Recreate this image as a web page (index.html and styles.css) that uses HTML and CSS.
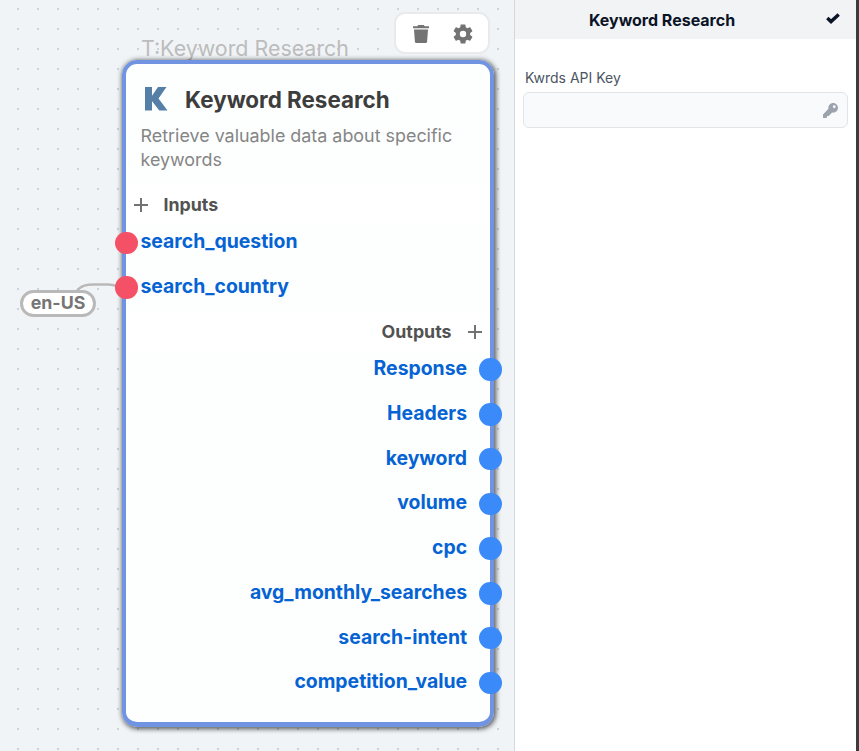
FILE: index.html
```html
<!DOCTYPE html>
<html lang="en">
<head>
<meta charset="utf-8">
<title>Keyword Research</title>
<link rel="stylesheet" href="styles.css">
</head>
<body>
<main class="canvas">
  <svg class="wire" width="46" height="14" viewBox="0 0 46 14"><path d="M2 10C7 3 13 2.500 20 2.500H34C40 2.500 42 4 44 5" fill="none" stroke="#b9b9b9" stroke-width="2.5"/></svg>
  <div class="constant">en-US</div>
  <div class="node-caption">T:Keyword Research</div>
  <div class="toolbar">
    <svg width="16" height="18" viewBox="0 0 16 18" fill="#737373"><path d="M0 1.3h4.3L5.2 0h5.6l.9 1.3H16v2H0zM1 4.5h14l-.9 12.2Q14 18 12.700 18H3.300Q2 18 1.900 16.700z"/></svg>
    <svg width="20" height="20" viewBox="2 2 20 20" fill="#737373"><path d="M19.140 12.940c.04-.3.06-.61.06-.94s-.02-.64-.07-.94l2.030-1.580c.18-.14.23-.41.12-.61l-1.920-3.320c-.12-.22-.37-.29-.59-.22l-2.390.96c-.5-.38-1.030-.7-1.620-.94l-.36-2.540A.48.48 0 0 0 13.920 2.400h-3.840c-.24 0-.43.17-.47.41l-.36 2.540c-.59.24-1.130.57-1.620.94l-2.390-.96c-.22-.08-.47 0-.59.22L2.740 8.870c-.12.21-.08.47.12.61l2.030 1.580c-.05.3-.09.63-.09.94s.02.64.07.94l-2.030 1.580c-.18.14-.23.41-.12.61l1.920 3.320c.12.22.37.29.59.22l2.390-.96c.5.38 1.030.7 1.620.94l.36 2.540c.05.24.24.41.48.41h3.840c.24 0 .44-.17.47-.41l.36-2.540c.59-.24 1.130-.56 1.620-.94l2.390.96c.22.08.47 0 .59-.22l1.920-3.320c.12-.22.07-.47-.12-.61zM12 15.200a3.200 3.200 0 1 1 0-6.400 3.200 3.200 0 0 1 0 6.400z"/></svg>
  </div>
  <article class="node">
    <header class="node-head">
      <svg width="23" height="24" viewBox="0 0 23 24" fill="#557fa6"><path d="M0 0H7V23.500H0zM6.500 9.500 13 0H21.500L13.500 11.500 22.500 23.500H14.300L6.500 13.500z"/></svg>
      <h1>Keyword Research</h1>
    </header>
    <p class="description">Retrieve valuable data about specific keywords</p>
    <div class="section"><svg width="16" height="16"><path d="M8 1V15M1 8H15" stroke="#737373" stroke-width="2"/></svg><span>Inputs</span></div>
    <ul class="inputs">
      <li><i class="port"></i>search_question</li>
      <li><i class="port"></i>search_country</li>
    </ul>
    <div class="section section-out"><span>Outputs</span><svg width="16" height="16"><path d="M8 1V15M1 8H15" stroke="#737373" stroke-width="2"/></svg></div>
    <ul class="outputs">
      <li>Response<i class="port"></i></li>
      <li>Headers<i class="port"></i></li>
      <li>keyword<i class="port"></i></li>
      <li>volume<i class="port"></i></li>
      <li>cpc<i class="port"></i></li>
      <li>avg_monthly_searches<i class="port"></i></li>
      <li>search-intent<i class="port"></i></li>
      <li>competition_value<i class="port"></i></li>
    </ul>
  </article>
</main>
<aside class="panel">
  <header class="panel-head">
    <h2>Keyword Research</h2>
    <svg class="check" width="14" height="11" viewBox="0 0 14 11"><path d="M1.300 5.100 5 8.600 12.700 1.400" fill="none" stroke="#0b1326" stroke-width="3.4"/></svg>
  </header>
  <div class="field">
    <label for="key">Kwrds API Key</label>
    <div class="input-wrap">
      <input id="key" type="text">
      <svg width="15" height="15" viewBox="0 0 512 512" fill="#9ca3af"><path d="M512 165c0 91-74 165-165 165-12 0-24-1-35-4L196 442h-62v58l-12 12H12L0 500V390l186-190c-3-11-4-23-4-35C182 74 256 0 347 0s165 74 165 165zM336 128a48 48 0 1 0 96 0 48 48 0 1 0-96 0z"/></svg>
    </div>
  </div>
</aside>
</body>
</html>
```
FILE: styles.css
```css
* { box-sizing: border-box; }
body {
  margin: 0;
  width: 859px;
  height: 751px;
  display: flex;
  overflow: hidden;
  font-family: Inter, sans-serif;
}
h1, h2, p, ul { margin: 0; padding: 0; }
ul { list-style: none; }
svg { display: block; flex: none; }

.canvas {
  position: relative;
  width: 514px;
  height: 751px;
  background-color: #f1f4f7;
  background-image: conic-gradient(from 270deg at 2px 2px, #cbd3df 90deg, transparent 0);
  background-size: 20px 20px;
  background-position: 17px 8px;
}
.wire { position: absolute; left: 74px; top: 282px; }
.constant {
  position: absolute;
  left: 20px;
  top: 290px;
  width: 76px;
  height: 27px;
  border: 3px solid #b9b9b9;
  border-radius: 14px;
  background: #fff;
  color: #757575;
  font-size: 17.800px;
  font-weight: 700;
  line-height: 20px;
  text-align: center;
}
.node-caption {
  position: absolute;
  left: 141px;
  top: 35px;
  color: #bcbcbc;
  font-size: 21.400px;
  line-height: 27px;
  white-space: nowrap;
}
.toolbar {
  position: absolute;
  left: 394px;
  top: 12px;
  width: 96px;
  height: 42px;
  display: flex;
  align-items: center;
  justify-content: center;
  gap: 24px;
  padding: 2px 0 0 2px;
  border: 2px solid #e8eaec;
  border-radius: 11px;
  background: #fff;
}

.node {
  position: absolute;
  left: 122px;
  top: 60px;
  width: 372px;
  height: 667px;
  border: 4px solid #7094e2;
  border-bottom-width: 5px;
  border-radius: 15px;
  background: rgba(254, 255, 255, .93);
  background-clip: padding-box;
  box-shadow: 1px 1px 5px 1px rgba(0, 0, 0, .65);
}
.node-head {
  display: flex;
  align-items: center;
  height: 56px;
  padding: 16px 0 0 19px;
  gap: 17px;
}
.node-head svg { margin-top: -3px; }
.node-head h1 {
  color: #3d3d3d;
  font-size: 22.400px;
  font-weight: 700;
  line-height: 28px;
  white-space: nowrap;
}
.description {
  height: 65px;
  padding: 4px 20px 0 14.500px;
  color: #858585;
  font-size: 17.900px;
  line-height: 24px;
}
.section {
  display: flex;
  align-items: center;
  height: 39px;
  gap: 15px;
  padding-left: 6.500px;
  background: #fff;
  color: #525252;
  font-size: 17.800px;
  font-weight: 700;
}
.section-out { justify-content: flex-end; height: 38px; padding: 0 7.500px 0 0; }
.inputs { height: 88.700px; }
.inputs li, .outputs li {
  display: flex;
  align-items: center;
  height: 44.780px;
  color: #0563d3;
  font-size: 19.400px;
  font-weight: 700;
  line-height: 24px;
  padding-bottom: 10px;
}
.outputs li { justify-content: flex-end; }
.port {
  flex: none;
  width: 22.500px;
  height: 22.500px;
  border-radius: 50%;
  margin-top: 3px;
}
.inputs .port { margin-left: -11px; margin-right: 3px; background: #f55166; }
.outputs .port { margin-left: 12px; margin-right: -11.600px; background: #3b8af9; }

.panel {
  width: 345px;
  border-left: 1px solid #d5d8dc;
  border-right: 3px solid #3b3b3b;
  background: #fff;
}
.panel-head {
  display: grid;
  grid-template-columns: 1fr auto 1fr;
  align-items: center;
  height: 39px;
  padding: 0 16px;
  background: #f2f3f5;
}
.panel-head h2 {
  grid-column: 2;
  margin-left: -47px;
  color: #0b1326;
  font-size: 16px;
  font-weight: 700;
  line-height: 24px;
}
.check { justify-self: end; margin-top: -2px; }
.field { padding: 29px 8px 0; }
.field label {
  display: block;
  padding-left: 2px;
  color: #4b5563;
  font-size: 14px;
  line-height: 20px;
}
.input-wrap {
  display: flex;
  align-items: center;
  width: 325px;
  height: 36px;
  margin-top: 4px;
  padding: 0 9px 0 8px;
  border: 1px solid #e1e4e9;
  border-radius: 6px;
  background: #f9fafb;
}
.input-wrap input {
  flex: 1;
  min-width: 0;
  border: 0;
  outline: 0;
  background: transparent;
  font: 14px Inter, sans-serif;
}
```
